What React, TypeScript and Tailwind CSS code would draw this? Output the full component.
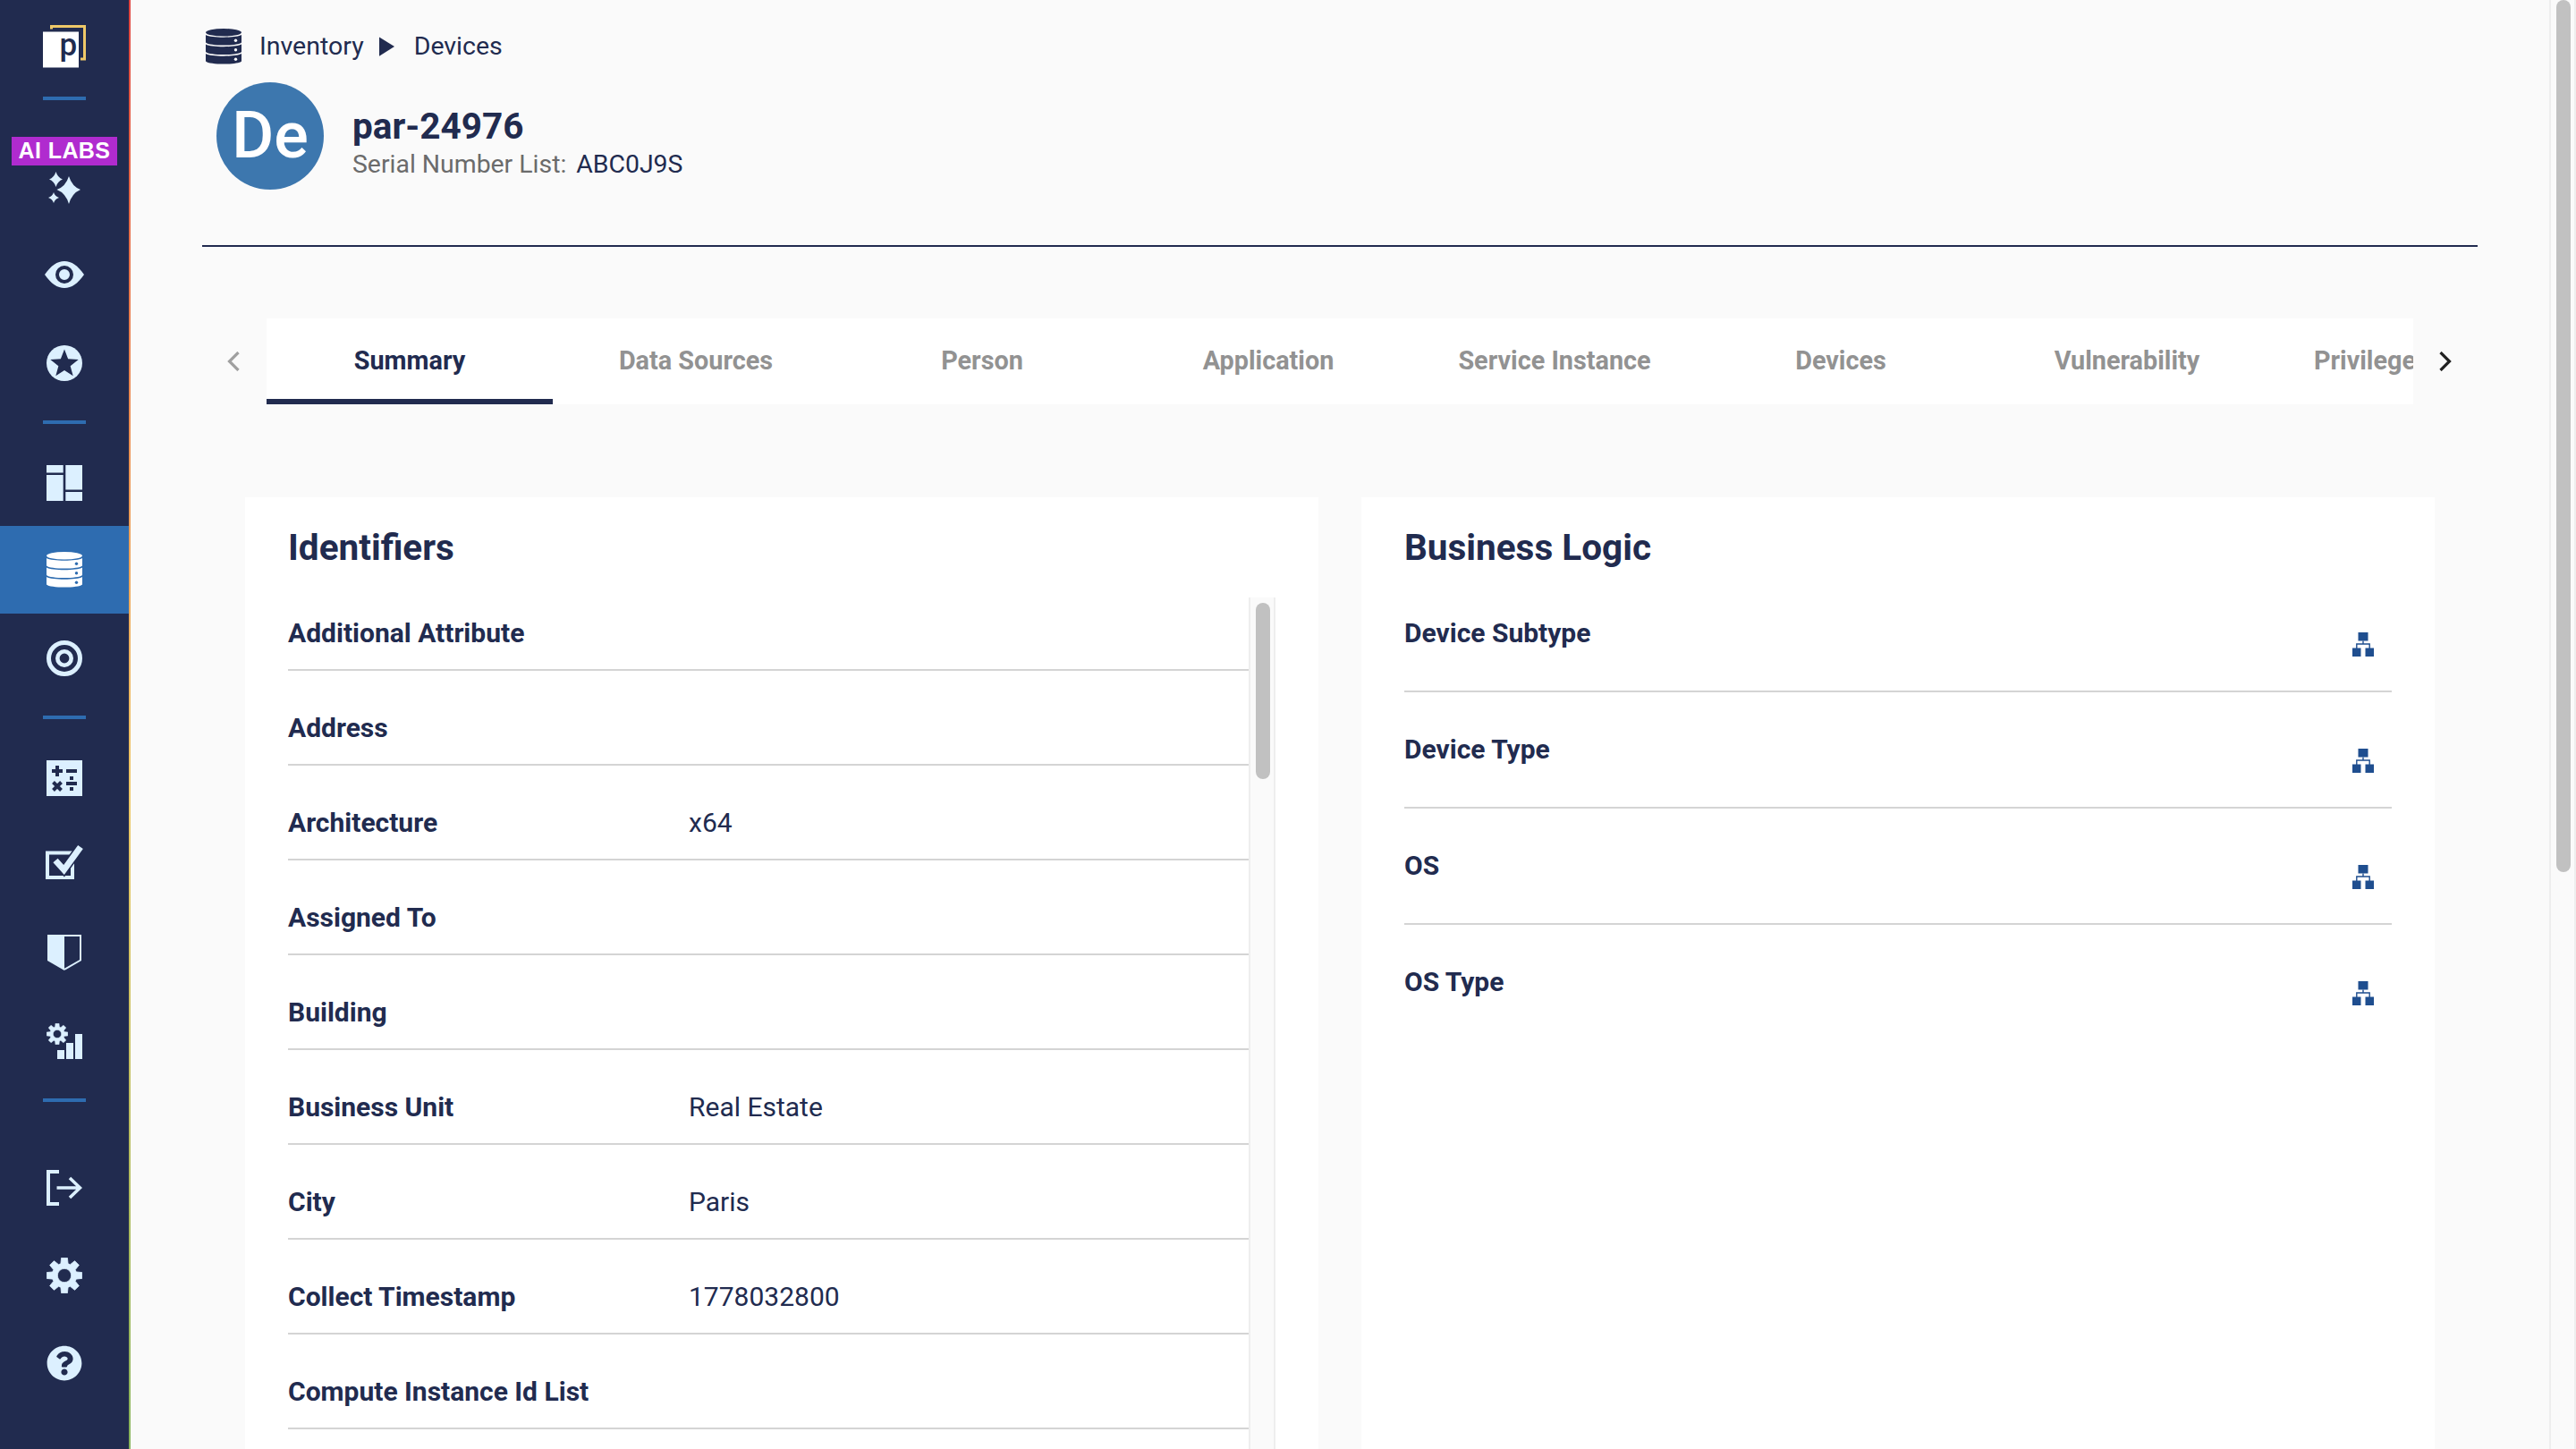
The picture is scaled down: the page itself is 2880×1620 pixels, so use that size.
import { ReactNode } from "react"
import { FaQuestionCircle } from "react-icons/fa"

const light = "#dcf0ff"
const navy = "#212b4f"

const identifiers = [
    { label: "Additional Attribute" },
    { label: "Address" },
    { label: "Architecture", value: "x64" },
    { label: "Assigned To" },
    { label: "Building" },
    { label: "Business Unit", value: "Real Estate" },
    { label: "City", value: "Paris" },
    { label: "Collect Timestamp", value: "1778032800" },
    { label: "Compute Instance Id List" },
]

const businessLogic = ["Device Subtype", "Device Type", "OS", "OS Type"]

const tabs = ["Summary", "Data Sources", "Person", "Application", "Service Instance", "Devices", "Vulnerability", "Privilege"]

const starPoints = (cx: number, cy: number, outer: number, inner: number) =>
    Array.from({ length: 10 }, (_, i) => {
        const r = i % 2 === 0 ? outer : inner
        const a = (Math.PI / 5) * i - Math.PI / 2
        return `${cx + r * Math.cos(a)},${cy + r * Math.sin(a)}`
    }).join(" ")

// 8 tooth cog in a 40x40 box, hole punched with evenodd
const cogPath = () => {
    const polar = (r: number, a: number) => `${(20 + r * Math.cos(a)).toFixed(2)} ${(20 + r * Math.sin(a)).toFixed(2)}`
    let d = ""
    for (let i = 0; i < 8; i++) {
        const a = (Math.PI / 4) * i - Math.PI / 2
        d += `${i === 0 ? "M" : "L"}${polar(13.8, a - 0.3)} L${polar(20, a - 0.17)} L${polar(20, a + 0.17)} L${polar(13.8, a + 0.3)} `
    }
    return `${d}Z M27.7 20 A7.7 7.7 0 1 0 12.3 20 A7.7 7.7 0 1 0 27.7 20 Z`
}

const CogIcon = ({ className }: { className: string }) => (
    <svg viewBox="0 0 40 40" className={className}>
        <path d={cogPath()} fill={light} fillRule="evenodd" stroke={light} strokeWidth="0.8" strokeLinejoin="round" />
    </svg>
)

const DbIcon = ({ fill, cut, className }: { fill: string; cut: string; className: string }) => (
    <svg viewBox="0 0 40 40" className={className}>
        <ellipse cx="20" cy="4.3" rx="20" ry="4.3" fill={fill} />
        {[7, 17.5, 28].map((y) => (
            <g key={y}>
                <path d={`M0 ${y} C6 ${y + 3.6} 34 ${y + 3.6} 40 ${y} V${y + 8.4} C36 ${y + 12.6} 4 ${y + 12.6} 0 ${y + 8.4} Z`} fill={fill} />
                <circle cx="33.5" cy={y + 6.2} r="1.7" fill={cut} />
            </g>
        ))}
    </svg>
)

const HierarchyIcon = () => (
    <svg viewBox="0 0 24 27" className="mt-[19px] mr-[20px] h-[27px] w-[24px]">
        <rect x="6.5" y="0" width="11" height="9.5" fill="#1f4e8f" />
        <path d="M12 9.5 V13 M4.8 18 V13 H19.2 V18" fill="none" stroke="#1f4e8f" strokeWidth="1.4" />
        <rect x="0" y="17.5" width="9.5" height="9.5" fill="#1f4e8f" />
        <rect x="14.5" y="17.5" width="9.5" height="9.5" fill="#1f4e8f" />
    </svg>
)

const NavItem = ({ active, children }: { active?: boolean; children: ReactNode }) => (
    <div className={`flex h-[98px] w-full items-center justify-center ${active ? "bg-[#2e6cb0]" : ""}`}>{children}</div>
)

const NavDivider = ({ className }: { className: string }) => <div className={`h-[4px] w-[48px] shrink-0 bg-[#2e6cb0] ${className}`} />

const Sidebar = () => (
    <div className="flex h-full w-[146px] shrink-0">
        <div className="flex w-[144px] flex-col items-center bg-[#212b4f]">
            <svg viewBox="0 0 48 48" className="mt-[28px] h-[48px] w-[48px] shrink-0">
                <path d="M9.5 4.5 V1.5 H46.5 V38 H42" fill="none" stroke="#eec868" strokeWidth="3" />
                <rect x="0" y="7.5" width="40" height="40" fill="#ffffff" />
                <text x="18.5" y="34" fontFamily="Roboto, sans-serif" fontWeight="500" fontSize="35" fill={navy}>p</text>
            </svg>
            <NavDivider className="mt-[32px]" />
            <div className="mt-[41px] flex h-[32px] w-[118px] shrink-0 items-center justify-center bg-[#b02bcf] pb-[2px] font-['Liberation_Sans',sans-serif] text-[25px] leading-none font-bold tracking-[0.4px] text-white">
                AI LABS
            </div>
            <svg viewBox="0 0 36 36" className="mt-[7px] mb-[30px] h-[36px] w-[36px] shrink-0" fill={light}>
                <path d="M23 5 Q26.5 16.5 36 20 Q26.5 24 23 36 Q19.5 24 9.5 20 Q19.5 16.5 23 5 Z" />
                <path d="M8.5 0 Q10.5 6.5 16 8.5 Q10.5 10.5 8.5 17 Q6.5 10.5 1 8.5 Q6.5 6.5 8.5 0 Z" />
                <path d="M6 23 Q7.4 27.6 12 29 Q7.4 30.4 6 35 Q4.6 30.4 0 29 Q4.6 27.6 6 23 Z" />
            </svg>
            <NavItem>
                <svg viewBox="0 0 44 30" className="h-[30px] w-[44px]">
                    <path d="M0 15 C7 5 14 0 22 0 C30 0 37 5 44 15 C37 25 30 30 22 30 C14 30 7 25 0 15 Z" fill={light} />
                    <circle cx="22" cy="15" r="8" fill="none" stroke={navy} strokeWidth="4" />
                </svg>
            </NavItem>
            <NavItem>
                <svg viewBox="0 0 40 40" className="mt-[2px] h-[40px] w-[40px]">
                    <circle cx="20" cy="20" r="20" fill={light} />
                    <polygon points={starPoints(20, 21, 16.5, 7)} fill={navy} />
                </svg>
            </NavItem>
            <NavDivider className="mt-[16px]" />
            <div className="mt-[16px] w-full">
                <NavItem>
                    <svg viewBox="0 0 40 40" className="mt-[2px] h-[40px] w-[40px]" fill={light}>
                        <rect x="0" y="0" width="18.7" height="8.5" />
                        <rect x="0" y="11" width="18.7" height="29" />
                        <rect x="21.3" y="0" width="18.7" height="27.5" />
                        <rect x="21.3" y="30" width="18.7" height="10" />
                    </svg>
                </NavItem>
                <NavItem active>
                    <DbIcon fill="#ffffff" cut="#2e6cb0" className="h-[40px] w-[40px]" />
                </NavItem>
                <NavItem>
                    <svg viewBox="0 0 40 40" className="mt-[2px] h-[40px] w-[40px]" fill="none" stroke={light}>
                        <circle cx="20" cy="20" r="17.5" strokeWidth="5" />
                        <circle cx="20" cy="20" r="7.7" strokeWidth="4.6" />
                    </svg>
                </NavItem>
            </div>
            <NavDivider className="mt-[16px]" />
            <div className="mt-[17px] w-full">
                <NavItem>
                    <svg viewBox="0 0 40 40" className="h-[40px] w-[40px]">
                        <rect width="40" height="40" fill={light} />
                        <path d="M6 12 H18 M12 6 V18 M22 12 H34 M7.5 24.5 L16.5 33.5 M16.5 24.5 L7.5 33.5 M22 26 H34" stroke={navy} strokeWidth="4" fill="none" />
                        <rect x="26" y="18" width="4" height="4" fill={navy} />
                        <rect x="26" y="30" width="4" height="4" fill={navy} />
                    </svg>
                </NavItem>
                <NavItem>
                    <svg viewBox="0 0 42 40" className="mb-[10px] h-[40px] w-[42px]" fill="none">
                        <rect x="2" y="10.5" width="28" height="27.5" stroke={light} strokeWidth="4" />
                        <path d="M11 19 L20.5 29.5 L39 4" stroke={navy} strokeWidth="10" />
                        <path d="M11 19 L20.5 29.5 L39 4" stroke={light} strokeWidth="7" />
                    </svg>
                </NavItem>
                <NavItem>
                    <svg viewBox="0 0 38 40" className="mb-[2px] h-[40px] w-[38px]">
                        <path d="M0 0 H19 V40 L0 29 Z" fill={light} />
                        <path d="M19 1 H37 V28.5 L19 38.8" fill="none" stroke={light} strokeWidth="2" />
                    </svg>
                </NavItem>
                <NavItem>
                    <div className="relative h-[40px] w-[40px]">
                        <CogIcon className="absolute top-0 left-0 h-[24px] w-[24px]" />
                        <svg viewBox="0 0 40 40" className="h-[40px] w-[40px]" fill={light}>
                            <rect x="12" y="30" width="8" height="10" />
                            <rect x="22" y="22" width="8" height="18" />
                            <rect x="32" y="12" width="8" height="28" />
                        </svg>
                    </div>
                </NavItem>
            </div>
            <NavDivider className="mt-[15px]" />
            <div className="mt-[47px] w-full">
                <NavItem>
                    <svg viewBox="0 0 40 40" className="h-[40px] w-[40px]" fill="none" stroke={light}>
                        <path d="M14 2 H2 V38 H14" strokeWidth="4" />
                        <path d="M11.5 20 H37 M26 9 L37.5 20 L26 31" strokeWidth="3.6" />
                    </svg>
                </NavItem>
                <NavItem>
                    <CogIcon className="h-[40px] w-[40px]" />
                </NavItem>
                <NavItem>
                    <FaQuestionCircle className="text-[40px] text-[#dcf0ff]" />
                </NavItem>
            </div>
        </div>
        <div className="w-[2px] bg-linear-to-b from-[#e04440] via-[#eec868] via-55% to-[#88b55e]" />
    </div>
)

const Header = () => (
    <div className="pl-[84px]">
        <div className="box-content flex h-[40px] items-center pt-[32px] text-[28.5px] text-[#212b4f]">
            <DbIcon fill={navy} cut="#fafafa" className="h-[40px] w-[40px]" />
            <span className="ml-[20px]">Inventory</span>
            <svg viewBox="0 0 16 20" className="mr-[22px] ml-[17px] h-[22px] w-[17px]">
                <polygon points="0,0 16,10 0,20" fill={navy} />
            </svg>
            <span>Devices</span>
        </div>
        <div className="mt-[20px] flex items-start pl-[12px]">
            <div className="flex h-[120px] w-[120px] items-center justify-center rounded-full bg-[#3d77ae] text-[72px] font-medium text-white">De</div>
            <div className="ml-[32px] pt-[25px]">
                <div className="text-[40.5px] leading-[48px] font-bold text-[#212b4f]">par-24976</div>
                <div className="text-[28.4px] leading-[38px] text-[#6b6b6b]">
                    Serial Number List:<span className="ml-[11px] text-[#212b4f]">ABC0J9S</span>
                </div>
            </div>
        </div>
    </div>
)

const TabBar = () => (
    <div className="mt-[80px] flex items-center pl-[108px]">
        <svg viewBox="0 0 14 22" className="h-[22px] w-[14px] shrink-0" fill="none" stroke="#a0a0a0" strokeWidth="3.2">
            <path d="M12.5 1 L2.5 11 L12.5 21" />
        </svg>
        <div className="ml-[30px] flex h-[96px] w-[2400px] overflow-hidden bg-white">
            {tabs.map((tab, i) => (
                <div
                    key={tab}
                    className={`flex shrink-0 items-center justify-center border-y-[6px] border-t-transparent text-[28.8px] font-bold ${i === 7 ? "w-[212px]" : "w-[320px]"} ${i === 0 ? "border-b-[#212b4f] text-[#212b4f]" : "border-b-transparent text-[#929292]"}`}
                >
                    {tab}
                </div>
            ))}
        </div>
        <svg viewBox="0 0 14 22" className="ml-[29px] h-[22px] w-[14px] shrink-0" fill="none" stroke="#222222" strokeWidth="3.2">
            <path d="M1.5 1 L11.5 11 L1.5 21" />
        </svg>
    </div>
)

const IdentifiersCard = () => (
    <div className="h-[1100px] w-[1200px] bg-white pt-[32px] pl-[48px]">
        <h2 className="text-[40.5px] leading-[48px] font-bold text-[#212b4f]">Identifiers</h2>
        <div className="mt-[32px] flex h-[1000px]">
            <div className="w-[1074px]">
                {identifiers.map((row, i) => (
                    <div
                        key={row.label}
                        className={`flex border-b-2 border-[#d4d4d4] text-[30px] leading-[40px] text-[#212b4f] ${i === 0 ? "h-[82px] pt-[20px]" : "h-[106px] pt-[44px]"}`}
                    >
                        <span className="w-[448px] font-bold">{row.label}</span>
                        <span>{row.value}</span>
                    </div>
                ))}
            </div>
            <div className="w-[30px] border-x-2 border-[#eeeeee] bg-[#fafafa] px-[6px] pt-[6px]">
                <div className="h-[197px] w-[16px] rounded-full bg-[#c1c1c1]" />
            </div>
        </div>
    </div>
)

const BusinessLogicCard = () => (
    <div className="h-[1100px] w-[1200px] bg-white px-[48px] pt-[32px]">
        <h2 className="text-[40.5px] leading-[48px] font-bold text-[#212b4f]">Business Logic</h2>
        <div className="mt-[32px]">
            {businessLogic.map((label, i) => (
                <div
                    key={label}
                    className={`flex items-start justify-between text-[30px] leading-[40px] font-bold text-[#212b4f] ${i === 0 ? "h-[106px] pt-[20px]" : "h-[130px] pt-[44px]"} ${i < 3 ? "border-b-2 border-[#d4d4d4]" : ""}`}
                >
                    <span>{label}</span>
                    <HierarchyIcon />
                </div>
            ))}
        </div>
    </div>
)

export default function App() {
    return (
        <div className="flex h-[1620px] w-[2880px] overflow-hidden bg-[#fafafa] font-['Roboto',sans-serif]">
            <Sidebar />
            <main className="w-[2704px] shrink-0">
                <Header />
                <div className="mx-[80px] mt-[62px] h-[2px] bg-[#212b4f]" />
                <TabBar />
                <div className="mt-[104px] flex gap-[48px] pl-[128px]">
                    <IdentifiersCard />
                    <BusinessLogicCard />
                </div>
            </main>
            <div className="w-[30px] shrink-0 border-x-2 border-[#eeeeee] pl-[6px]">
                <div className="h-[975px] w-[16px] rounded-full bg-[#c1c1c1]" />
            </div>
        </div>
    )
}
